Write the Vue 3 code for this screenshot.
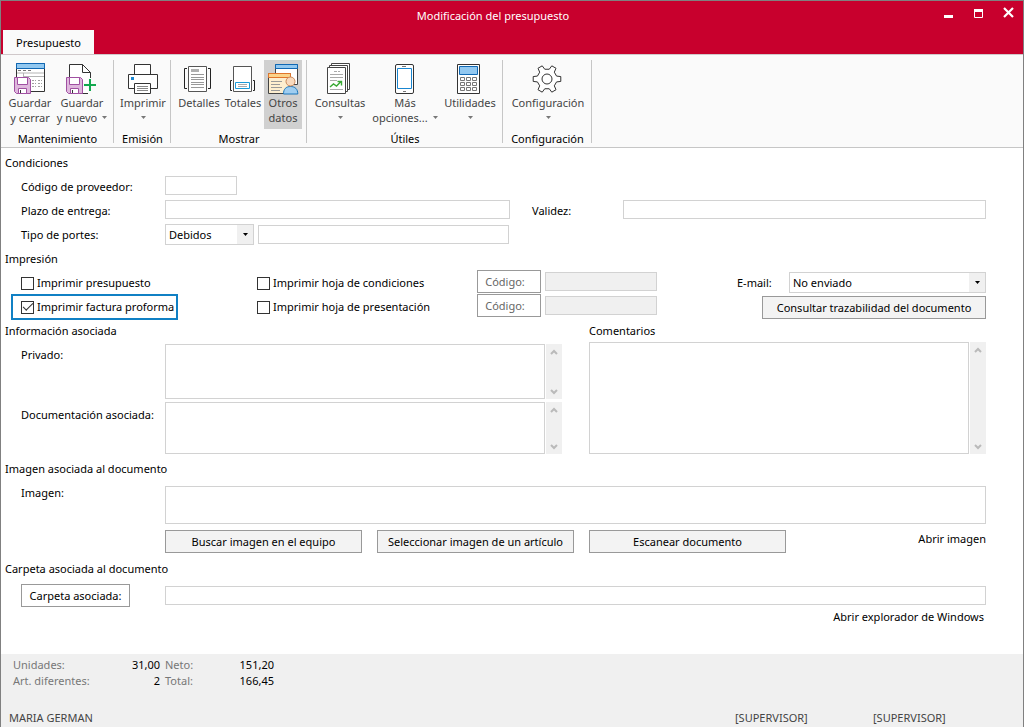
<script setup>
import { ref } from 'vue'

// Outline of the settings gear: six teeth around the centre (16, 17).
function gearPath(teeth, outer, inner) {
  const points = []
  for (let i = 0; i < teeth; i++) {
    const middle = (i * 360) / teeth
    for (const [offset, radius] of [[-17, inner], [-10, outer], [10, outer], [17, inner]]) {
      const angle = ((middle + offset) * Math.PI) / 180
      points.push(`${(16 + radius * Math.cos(angle)).toFixed(2)} ${(17 + radius * Math.sin(angle)).toFixed(2)}`)
    }
  }
  return `M${points.join('L')}Z`
}

const floppy = `
  <path d="M1.5 15.5H15.5L17.5 17.5V31.5H3.5L1.5 29.5Z" fill="#dfb8dd" stroke="#a050a2"/>
  <path d="M4.5 15.5H14.5V22.5H4.5Z" fill="#fff" stroke="#a050a2"/>
  <path d="M5.5 26.5H13.5V31.5H5.5Z" fill="#fff" stroke="#a050a2"/>
  <path d="M7.5 28V31" stroke="#333"/>`

const icons = {
  saveClose: `
    <path d="M3.5 1.5H31.5V29.5H3.5Z" fill="#fff" stroke="#333"/>
    <path d="M3.5 1.5H31.5V6.5H3.5Z" fill="#92c8f0" stroke="#1068b4"/>
    <path d="M5 8.5H8M10 8.5H13M15 8.5H18" stroke="#777"/>
    <path d="M4 11H31M10.5 11V15M10 14.5H31" stroke="#b4b4b4"/>
    <path d="M19 18.5H23M25 18.5H29M19 21.5H23M25 21.5H29M19 24.5H23M25 24.5H29" stroke="#a0a0a0" stroke-dasharray="2 1"/>
    ${floppy}`,
  saveNew: `
    <path d="M4.500 31.500V2.500H17.500L25.500 10.500V31.500Z" fill="#fff" stroke="#333"/>
    <path d="M17.500 2.500V10.500H25.500" fill="none" stroke="#333"/>
    <path d="M25 16V33M18 23H32" stroke="#fafafa" stroke-width="4"/>
    <path d="M25 17V29M19 23H31" stroke="#12a84e" stroke-width="2"/>
    ${floppy}`,
  print: `
    <path d="M8.500 2.500H24.500V12.500H8.500Z" fill="#fff" stroke="#333"/>
    <path d="M2.500 12.500H31.500V26.500H2.500Z" fill="#fff" stroke="#333"/>
    <path d="M5 15H8V18H5Z" fill="#1a86d0"/>
    <path d="M8.500 21.500H24.500V31.500H8.500Z" fill="#fff" stroke="#333"/>
    <path d="M11 24.500H22M11 26.500H22M11 28.500H22" stroke="#888"/>`,
  details: `
    <path d="M6.500 4.500H24.500V29.500H6.500Z" fill="#fff" stroke="#555"/>
    <path d="M9 7H17V10H9Z" fill="#b0b0b0"/>
    <path d="M9 12.500H22M9 15.500H22M9 17.500H22M9 20.500H22M9 22.500H22M9 25.500H22" stroke="#999"/>
    <path d="M5 6.500H2.500V26.500H5M26 6.500H28.500V26.500H26" fill="none" stroke="#222"/>`,
  totals: `
    <path d="M7.500 4.500H25.500V29.500H7.500Z" fill="#fff" stroke="#555"/>
    <path d="M9.500 20.500H23.500V26.500H9.500Z" fill="#fff" stroke="#1c9ad8"/>
    <path d="M12 22.500H21M12 24.500H21" stroke="#aaa"/>
    <path d="M6 18.500H4.500V28.500H6M27 18.500H28.500V28.500H27" fill="none" stroke="#222"/>`,
  other: `
    <path d="M9.500 2.500H31.500V22.500H9.500Z" fill="#fff" stroke="#444"/>
    <path d="M9.500 2.500H31.500V6.500H9.500Z" fill="#92c8f0" stroke="#1068b4"/>
    <path d="M2.500 11.500H24.500V31.500H2.500Z" fill="#fdeecf" stroke="#444"/>
    <path d="M2.500 11.500H24.500V15.500H2.500Z" fill="#fbd38a" stroke="#e0762c"/>
    <path d="M5 19.500H16M5 22.500H14M5 25.500H16M5 28.500H14" stroke="#999"/>
    <path d="M17.500 32C17.500 27 20 24.500 24.500 24.500S31.800 27 31.800 32Z" fill="#9fcdf0" stroke="#1a76bc"/>
    <circle cx="24.500" cy="19.500" r="4.500" fill="#f8d9bd" stroke="#c9895a"/>`,
  queries: `
    <path d="M8.500 1.500H26.500V27.500H8.500Z" fill="#fff" stroke="#444"/>
    <path d="M6.500 3.500H24.500V29.500H6.500Z" fill="#fff" stroke="#444"/>
    <path d="M4.500 5.500H22.500V31.500H4.500Z" fill="#fff" stroke="#444"/>
    <path d="M11 9.500H14M15 9.500H17M7 12.500H20M7 15.500H20M7 18.500H14M7 27.500H20" stroke="#aaa"/>
    <path d="M7 25L10.500 22L13.500 24L18 19.500M14.500 19.500H18.500V23.500" fill="none" stroke="#3aaa35" stroke-width="1.400"/>`,
  more: `
    <rect x="7.500" y="2.500" width="18" height="29" rx="1.500" fill="#fff" stroke="#333"/>
    <path d="M9.500 6.500H23.500V26.500H9.500Z" fill="#fff" stroke="#1a86d0"/>
    <path d="M14 4.500H18M15 29.500H18" stroke="#777"/>`,
  tools: `
    <path d="M4.500 2.500H26.500V31.500H4.500Z" fill="#fff" stroke="#333"/>
    <path d="M6.500 4.500H24.500V12.500H6.500Z" fill="#92c8f0" stroke="#1068b4"/>
    <path d="M7.500 15.500h4v3h-4zM13.500 15.500h4v3h-4zM19.500 15.500h4v3h-4zM7.500 20.500h4v3h-4zM13.500 20.500h4v3h-4zM19.500 20.500h4v3h-4zM7.500 25.500h4v3h-4zM13.500 25.500h4v3h-4zM19.500 25.500h4v3h-4z" fill="#fff" stroke="#777"/>`,
  settings: `
    <path d="${gearPath(6, 14, 10)}" fill="#fff" stroke="#333" stroke-linejoin="round"/>
    <circle cx="16" cy="17" r="5" fill="#fff" stroke="#333"/>`
}

const groups = [
  { name: 'Mantenimiento', size: 'g-save', items: [
    { icon: 'saveClose', lines: ['Guardar', 'y cerrar'], size: 'w52' },
    { icon: 'saveNew', lines: ['Guardar', 'y nuevo'], arrow: true, size: 'w52' }
  ] },
  { name: 'Emisión', size: 'g-print', items: [
    { icon: 'print', lines: ['Imprimir', ''], arrow: true, size: 'w56' }
  ] },
  { name: 'Mostrar', size: 'g-show', items: [
    { icon: 'details', lines: ['Detalles'], size: 'w44' },
    { icon: 'totals', lines: ['Totales'], size: 'w44' },
    { icon: 'other', lines: ['Otros', 'datos'], size: 'w38', active: true }
  ] },
  { name: 'Útiles', size: 'g-tools', items: [
    { icon: 'queries', lines: ['Consultas', ''], arrow: true, size: 'w64' },
    { icon: 'more', lines: ['Más', 'opciones...'], arrow: true, size: 'w66' },
    { icon: 'tools', lines: ['Utilidades', ''], arrow: true, size: 'w64' }
  ] },
  { name: 'Configuración', size: 'g-config', items: [
    { icon: 'settings', lines: ['Configuración', ''], arrow: true, size: 'w88' }
  ] }
]

const carriage = ref('Debidos')
const email = ref('No enviado')
const printQuote = ref(false)
const printProforma = ref(true)
const printConditions = ref(false)
const printCover = ref(false)
</script>

<template>
  <div class="window">
    <header class="titlebar">
      <h1>Modificación del presupuesto</h1>
      <div class="controls">
        <button type="button" aria-label="Minimizar">
          <svg width="11" height="11" viewBox="0 0 11 11"><path d="M1 8H10V11H1Z" fill="#fff" /></svg>
        </button>
        <button type="button" aria-label="Maximizar">
          <svg width="11" height="11" viewBox="0 0 11 11"><path d="M1.500 2.500H9.500V10.500H1.500Z" fill="none" stroke="#fff" /><path d="M1 2H10V5H1Z" fill="#fff" /></svg>
        </button>
        <button type="button" aria-label="Cerrar">
          <svg width="11" height="11" viewBox="0 0 11 11"><path d="M1 1L10 10M10 1L1 10" stroke="#fff" stroke-width="2.200" /></svg>
        </button>
      </div>
      <nav class="tabs"><button type="button" class="tab">Presupuesto</button></nav>
    </header>

    <section class="ribbon">
      <div v-for="group in groups" :key="group.name" class="group" :class="group.size">
        <div class="tools">
          <button
            v-for="item in group.items"
            :key="item.icon"
            type="button"
            class="tool"
            :class="[item.size, { active: item.active }]"
          >
            <svg class="icon" width="34" height="34" viewBox="0 0 34 34" aria-hidden="true" v-html="icons[item.icon]" />
            <span v-for="(line, i) in item.lines" :key="i" class="line">
              {{ line }}
              <svg v-if="item.arrow && i === 1" class="drop" width="5" height="3" viewBox="0 0 5 3"><path d="M0 0H5L2.500 3Z" fill="#777" /></svg>
            </span>
          </button>
        </div>
        <div class="group-name">{{ group.name }}</div>
      </div>
    </section>

    <main class="form">
      <h2>Condiciones</h2>
      <div class="row terms">
        <label for="supplier">Código de proveedor:</label>
        <input id="supplier" type="text" class="short" />
      </div>
      <div class="row terms">
        <label for="delivery">Plazo de entrega:</label>
        <input id="delivery" type="text" />
        <label for="validity" class="second">Validez:</label>
        <input id="validity" type="text" />
      </div>
      <div class="row terms">
        <label for="carriage">Tipo de portes:</label>
        <div class="pair">
          <div class="select carriage">
            <select id="carriage" v-model="carriage"><option>Debidos</option><option>Pagados</option></select>
            <span class="caret"><svg width="5" height="3" viewBox="0 0 5 3"><path d="M0 0H5L2.500 3Z" /></svg></span>
          </div>
          <input type="text" aria-label="Descripción de portes" />
        </div>
      </div>

      <h2>Impresión</h2>
      <div class="row printing">
        <label class="check"><input v-model="printQuote" type="checkbox" />Imprimir presupuesto</label>
        <label class="check"><input v-model="printConditions" type="checkbox" />Imprimir hoja de condiciones</label>
        <div class="code">
          <button type="button" class="plain" disabled>Código:</button>
          <input type="text" disabled aria-label="Código de condiciones" />
        </div>
        <div class="email">
          <label for="email">E-mail:</label>
          <div class="select">
            <select id="email" v-model="email"><option>No enviado</option><option>Enviado</option></select>
            <span class="caret"><svg width="5" height="3" viewBox="0 0 5 3"><path d="M0 0H5L2.500 3Z" /></svg></span>
          </div>
        </div>
      </div>
      <div class="row printing">
        <label class="check marked"><input v-model="printProforma" type="checkbox" />Imprimir factura proforma</label>
        <label class="check"><input v-model="printCover" type="checkbox" />Imprimir hoja de presentación</label>
        <div class="code">
          <button type="button" class="plain" disabled>Código:</button>
          <input type="text" disabled aria-label="Código de presentación" />
        </div>
        <div class="email"><button type="button" class="trace">Consultar trazabilidad del documento</button></div>
      </div>

      <div class="notes">
        <div class="info">
          <h2>Información asociada</h2>
          <div class="memo first">
            <label for="private">Privado:</label>
            <textarea id="private"></textarea>
            <div class="bar" aria-hidden="true">
              <svg width="8" height="7" viewBox="0 0 8 7"><path d="M1 5L4 2L7 5" /></svg>
              <svg width="8" height="7" viewBox="0 0 8 7"><path d="M1 2L4 5L7 2" /></svg>
            </div>
          </div>
          <div class="memo">
            <label for="docs">Documentación asociada:</label>
            <textarea id="docs"></textarea>
            <div class="bar" aria-hidden="true">
              <svg width="8" height="7" viewBox="0 0 8 7"><path d="M1 5L4 2L7 5" /></svg>
              <svg width="8" height="7" viewBox="0 0 8 7"><path d="M1 2L4 5L7 2" /></svg>
            </div>
          </div>
        </div>
        <div class="comments">
          <label for="comments">Comentarios</label>
          <div class="comment-box">
            <textarea id="comments"></textarea>
            <div class="bar" aria-hidden="true">
              <svg width="8" height="7" viewBox="0 0 8 7"><path d="M1 5L4 2L7 5" /></svg>
              <svg width="8" height="7" viewBox="0 0 8 7"><path d="M1 2L4 5L7 2" /></svg>
            </div>
          </div>
        </div>
      </div>

      <h2 class="image-title">Imagen asociada al documento</h2>
      <div class="image-row">
        <label for="image">Imagen:</label>
        <textarea id="image"></textarea>
      </div>
      <div class="actions">
        <button type="button">Buscar imagen en el equipo</button>
        <button type="button">Seleccionar imagen de un artículo</button>
        <button type="button">Escanear documento</button>
        <a href="#">Abrir imagen</a>
      </div>

      <h2 class="folder-title">Carpeta asociada al documento</h2>
      <div class="folder">
        <button type="button" class="plain">Carpeta asociada:</button>
        <input type="text" aria-label="Carpeta asociada" />
      </div>
      <a href="#" class="explorer">Abrir explorador de Windows</a>
    </main>

    <footer class="status">
      <dl class="totals">
        <dt>Unidades:</dt><dd>31,00</dd><dt>Neto:</dt><dd>151,20</dd>
        <dt>Art. diferentes:</dt><dd>2</dd><dt>Total:</dt><dd>166,45</dd>
      </dl>
      <div class="users"><span>MARIA GERMAN</span><span>[SUPERVISOR]</span><span>[SUPERVISOR]</span></div>
    </footer>
  </div>
</template>

<style>
body {
  background: #fff;
}
</style>

<style scoped>
.window,
.window * {
  box-sizing: border-box;
}
.window {
  display: flex;
  flex-direction: column;
  min-height: 100vh;
  border: 1px solid #808080;
  border-bottom: 0;
  background: #fff;
  color: #000;
  font: 11px/16px "Noto Sans", "Open Sans", sans-serif;
}
button,
input,
select,
textarea {
  margin: 0;
  font: inherit;
  color: inherit;
  border-radius: 0;
}
h1,
h2,
dl,
dd {
  margin: 0;
  font: inherit;
}
a {
  color: inherit;
  text-decoration: none;
}

.titlebar {
  display: grid;
  grid-template-columns: 1fr auto;
  grid-template-rows: 29px 24px;
  background: #c8002d;
}
h1 {
  padding: 7px 0 0 48px;
  color: #fff;
  text-align: center;
}
.controls {
  display: flex;
  width: 86px;
  gap: 8px;
}
.controls button {
  width: 22px;
  height: 20px;
  padding: 0;
  border: 0;
  background: none;
}
.controls svg {
  display: block;
  margin: 3px auto 0;
}
.tabs {
  padding-left: 2px;
  grid-column: 1 / -1;
}
.tab {
  display: block;
  width: 91px;
  height: 24px;
  padding: 1px 0 0;
  border: 0;
  background: #fafafa;
}

.ribbon {
  display: flex;
  height: 94px;
  padding: 5px 0 4px;
  border-top: 1px solid #d0c8ca;
  border-bottom: 1px solid #c6c6c6;
  background: #fafafa;
}
.group {
  display: flex;
  flex-direction: column;
  justify-content: space-between;
  flex: none;
  border-right: 1px solid #c6c6c6;
}
.g-save { width: 113px; }
.g-print { width: 57px; }
.g-show { width: 136px; }
.g-tools { width: 196px; }
.g-config { width: 89px; }
.tools {
  display: flex;
}
.g-save .tools { padding-left: 2px; }
.g-show .tools { padding-left: 5px; }
.tool {
  display: flex;
  flex-direction: column;
  align-items: center;
  height: 69px;
  padding: 2px 0 0 2px;
  border: 0;
  background: none;
  color: #444;
  line-height: 15px;
}
.tool.active {
  padding-left: 0;
  background: #d0d0d0;
}
.w38 { width: 38px; }
.w44 { width: 44px; }
.w52 { width: 52px; }
.w56 { width: 56px; }
.w64 { width: 64px; }
.w66 { width: 66px; }
.w88 { width: 88px; }
.icon {
  display: block;
  flex: none;
  margin-bottom: -1px;
}
.line {
  display: flex;
  align-items: center;
  gap: 5px;
  height: 15px;
  white-space: nowrap;
}
.drop {
  flex: none;
}
.group-name {
  padding-left: 1px;
  line-height: 8px;
  text-align: center;
}

.form {
  flex: 1;
  padding: 3px 37px 20px 4px;
}
h2,
.comments > label {
  display: block;
  height: 24px;
  line-height: 24px;
}
.row {
  display: grid;
  height: 24px;
  padding-left: 16px;
}
.row label {
  line-height: 24px;
}
.terms {
  grid-template-columns: 144px 345fr 113px 363fr;
}
.second {
  padding-left: 22px;
}
input[type="text"] {
  width: 100%;
  min-width: 0;
  height: 19px;
  margin-top: 1px;
  padding: 0 4px;
  border: 1px solid #d2d2d2;
  background: #fff;
}
input[type="text"]:disabled {
  background: #f0f0f0;
}
input[type="text"].short {
  width: 72px;
}
.pair {
  display: flex;
  gap: 4px;
  padding: 1px 1px 0 0;
}
.select {
  display: grid;
  flex: 1;
  height: 21px;
}
.select.carriage {
  flex: 0 0 89px;
}
.select select {
  grid-area: 1 / 1;
  width: 100%;
  padding: 0 20px 0 3px;
  border: 1px solid #d2d2d2;
  background: #fff;
  appearance: none;
}
.caret {
  grid-area: 1 / 1;
  display: flex;
  align-items: center;
  justify-content: center;
  justify-self: end;
  width: 16px;
  margin: 1px 1px 1px 0;
  background: #f0f0f0;
  pointer-events: none;
}
.printing {
  grid-template-columns: 236fr 220fr 180fr 329fr;
}
.check {
  position: relative;
  display: flex;
  align-items: center;
  gap: 3px;
  justify-self: start;
}
.check input {
  appearance: none;
  display: grid;
  place-items: center;
  width: 13px;
  height: 13px;
  border: 1px solid #333;
  background: #fff;
}
.check input:checked::after {
  content: "";
  width: 9px;
  height: 4px;
  margin-top: -3px;
  border-left: 1px solid #333;
  border-bottom: 1px solid #333;
  transform: rotate(-45deg);
}
.marked::before {
  content: "";
  position: absolute;
  inset: -1px -4px -1px -10px;
  border: 2px solid #1080c4;
}
.code {
  display: flex;
  gap: 4px;
}
.form button {
  height: 23px;
  padding: 0;
  border: 1px solid #999;
  background: #f3f3f3;
}
.form button.plain {
  flex: none;
  background: #fff;
}
.code button.plain {
  width: 64px;
  margin-top: -1px;
  padding-right: 8px;
  color: #666;
}
.email {
  display: flex;
  margin-top: 1px;
  padding-left: 80px;
}
.email label {
  width: 52px;
  line-height: 22px;
}
.form .trace {
  width: 224px;
  margin-left: auto;
}

.notes {
  display: grid;
  grid-template-columns: 557fr 397fr;
  column-gap: 27px;
}
textarea {
  display: block;
  min-width: 0;
  border: 1px solid #d2d2d2;
  background: #fff;
  resize: none;
  overflow: hidden;
}
.memo {
  display: grid;
  grid-template-columns: 144px 1fr 17px;
  height: 52px;
  padding-left: 16px;
}
.memo.first {
  height: 55px;
  margin: 1px 0 3px;
}
.memo label {
  padding-top: 5px;
}
.memo.first label {
  padding-top: 3px;
}
.bar {
  display: flex;
  flex-direction: column;
  justify-content: space-between;
  align-items: center;
  margin-left: 1px;
  padding: 5px 0 4px;
  background: #f0f0f0;
}
.bar path {
  fill: none;
  stroke: #bababa;
  stroke-width: 2;
}
.comments {
  display: flex;
  flex-direction: column;
}
.comments > label {
  height: 23px;
}
.comment-box {
  display: grid;
  grid-template-columns: 1fr 17px;
  flex: 1;
}
.image-title {
  margin-top: 3px;
}
.image-row {
  display: grid;
  grid-template-columns: 144px 1fr;
  padding-left: 16px;
}
.image-row label {
  padding-top: 4px;
}
.image-row textarea {
  height: 38px;
  margin-top: 5px;
}
.actions {
  display: flex;
  gap: 15px;
  margin-top: 6px;
  padding-left: 160px;
}
.actions button {
  flex: 0 1 197px;
}
.actions a {
  margin-left: auto;
  line-height: 18px;
}
.folder-title {
  margin-top: 4px;
}
.folder {
  display: grid;
  grid-template-columns: 109px 1fr;
  column-gap: 35px;
  margin-top: 3px;
  padding-left: 16px;
}
.folder input[type="text"] {
  margin-top: 2px;
}
.explorer {
  display: block;
  margin-top: 2px;
  padding-right: 2px;
  text-align: right;
}

.status {
  display: flex;
  flex-direction: column;
  justify-content: space-between;
  height: 73px;
  padding: 3px 0 1px;
  background: #f0f0f0;
}
.totals {
  display: grid;
  grid-template-columns: 97px 50px 54px 60px;
  padding-left: 12px;
}
.totals dt {
  color: #777;
}
.totals dt:nth-of-type(even) {
  padding-left: 5px;
}
.totals dd {
  text-align: right;
}
.users {
  display: grid;
  grid-template-columns: 726fr 138fr 150fr;
  padding-left: 8px;
  color: #444;
}
</style>
